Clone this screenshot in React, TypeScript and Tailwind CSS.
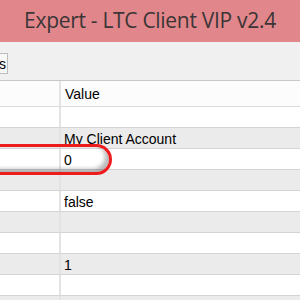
import React from 'react';

const rows: { value: string; shade: boolean }[] = [
  { value: '', shade: false },
  { value: 'My Client Account', shade: true },
  { value: '0', shade: false },
  { value: '', shade: true },
  { value: 'false', shade: false },
  { value: '', shade: true },
  { value: '', shade: false },
  { value: '1', shade: true },
  { value: '', shade: false },
  { value: '', shade: true },
];

export default function App() {
  return (
    <div className="relative w-[300px] h-[300px] overflow-hidden bg-[#f0f0f0] font-['Liberation_Sans',Arial,sans-serif]">
      {/* title bar */}
      <div className="h-[42px] bg-[#e1878b] flex items-center justify-center">
        <span className="text-[21px] text-[#3b3536] font-['Open_Sans','Noto_Sans',sans-serif] tracking-[-0.3px] pb-[1px]">
          Expert - LTC Client VIP v2.4
        </span>
      </div>

      {/* tab strip */}
      <div className="h-[38px] pt-[11px]">
        <div className="h-[21px] w-[8px] border-r border-t border-b border-[#bdbdbd] bg-[#f7f7f7] flex items-center justify-end overflow-hidden">
          <span className="text-[14px] text-black leading-none pr-[1px]">s</span>
        </div>
      </div>

      {/* property grid */}
      <div className="border-t border-[#c8c8c8] bg-white">
        <div className="h-[26px] flex border-b border-[#dcdcdc] bg-[#fcfcfc]">
          <div className="w-[61px] border-r-2 border-[#e3e3e3]" />
          <div className="pl-[4px] pt-[6px] text-[14px] leading-none text-black">Value</div>
        </div>
        {rows.map((r, i) => (
          <div
            key={i}
            className={`h-[21px] flex border-b border-[#d4d4d4] ${r.shade ? 'bg-[#ebebeb]' : 'bg-white'}`}
          >
            <div className="w-[61px] border-r-2 border-[#e3e3e3]" />
            <div className="pl-[3px] pt-[4px] text-[14px] leading-none text-black">{r.value}</div>
          </div>
        ))}
      </div>

      {/* highlight marker */}
      <div className="absolute left-[-24px] top-[144px] w-[136px] h-[31px] rounded-full border-[3px] border-[#ee1c1c] shadow-[inset_-4px_-3px_4px_rgba(0,0,0,0.28)]" />
    </div>
  );
}
